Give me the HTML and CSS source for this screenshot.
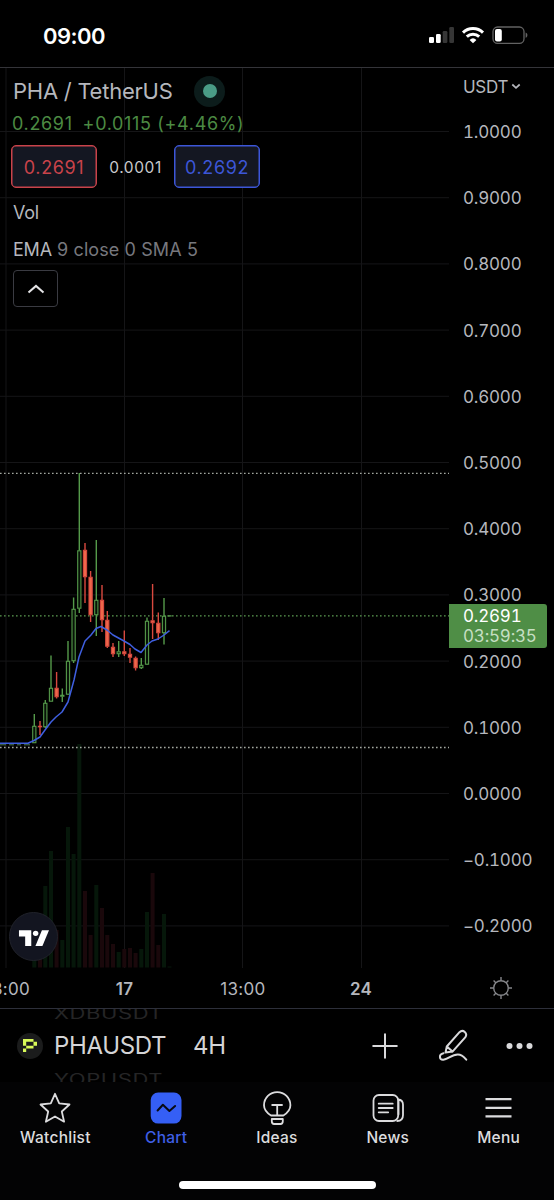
FILE: index.html
```html
<!DOCTYPE html>
<html lang="en">
<head>
<meta charset="utf-8">
<title>PHAUSDT chart</title>
<link rel="stylesheet" href="styles.css">
</head>
<body>
<div class="phone">
  <header class="status">
    <span class="clock">09:00</span>
    <svg class="status-icons" width="102" height="24" viewBox="426 24 102 24">
      <g fill="#fff"><rect x="429" y="37" width="5" height="6" rx="1.3"/><rect x="436" y="34" width="4.7" height="9" rx="1.3"/></g>
      <g fill="#363636"><rect x="442.7" y="31" width="4.7" height="12" rx="1.3"/><rect x="449.3" y="27" width="4.7" height="16" rx="1.3"/></g>
      <g fill="none" stroke="#fff" stroke-width="3"><path d="M463 32.6a14.4 14.4 0 0 1 20 0"/><path d="M466.8 36.7a9 9 0 0 1 12.4 0"/></g>
      <path d="M469.6 39.9a5 5 0 0 1 6.8 0L473 43.3z" fill="#fff"/>
      <rect x="493" y="27" width="31" height="16.3" rx="4.6" fill="none" stroke="#626262" stroke-width="1.3"/>
      <rect x="495" y="29" width="6.8" height="12.4" rx="2" fill="#fff"/>
      <path d="M525.6 32.4c2.4.8 2.4 4.6 0 5.4z" fill="#626262"/>
    </svg>
  </header>

  <main class="chart">
    <div class="plot">
      <svg class="canvas" width="449" height="900" viewBox="0 68 449 900">
        <g id="grid" stroke="#151517" stroke-width="1"></g>
        <g id="volume"></g>
        <g stroke-width="1.3" stroke-dasharray="1.6 2.4">
          <path d="M0 473.3H449" stroke="#a3a8a1"/><path d="M0 747.5H449" stroke="#a3a8a1"/><path d="M0 615.8H449" stroke="#5d9d53"/>
        </g>
        <g id="candles"></g>
        <path d="M0 744.8h6m3 0h5m3 0h4m3 0h6" stroke="#4c7b58" fill="none"/>
        <path d="M0 743.3H28L34 740.5 40 737 45 730 51 722 56 717 62 712 68 702 74 680 79 657 85 641 91 635 96 628.5 101 626.5 107 630 113 635 124 641 130 644.5 135 649 141 652.5 147 645 152 641 158 639 164 635 169.5 630.7" fill="none" stroke="#3f5fe0" stroke-width="1.5" stroke-linejoin="round"/>
      </svg>
      <section class="legend">
        <div class="title"><h1>PHA / TetherUS</h1><span class="market"><i></i></span></div>
        <div class="change"><span>0.2691</span><span>+0.0115 (+4.46%)</span></div>
        <div class="quotes"><span class="quote sell">0.2691</span><span class="spread">0.0001</span><span class="quote buy">0.2692</span></div>
        <div class="vol">Vol</div>
        <div class="ema"><b>EMA</b> 9 close 0 SMA 5</div>
        <button class="collapse" aria-label="Collapse"><svg width="18" height="12" viewBox="0 0 18 12"><path d="M1.5 9.6 9 2.9l7.500 6.700" fill="none" stroke="#e4e4e6" stroke-width="2"/></svg></button>
      </section>
      <span class="brand"><svg width="31" height="17" viewBox="0 0 32 17" fill="#fff"><path d="M1 0h12.700v16.300H7.400V6.500H1z"/><circle cx="18.200" cy="3.200" r="2.800"/><path d="M24.700 0H32l-6.800 16.300H18z"/></svg></span>
    </div>
    <aside class="prices">
      <div class="unit">USDT<svg width="10" height="8" viewBox="0 0 10 8"><path d="m1.300 1.500 3.700 3.300 3.700-3.300" fill="none" stroke="#b5b7bd" stroke-width="1.700"/></svg></div>
      <ol class="scale"><li>1.0000</li><li>0.9000</li><li>0.8000</li><li>0.7000</li><li>0.6000</li><li>0.5000</li><li>0.4000</li><li>0.3000</li><li>0.2000</li><li>0.1000</li><li>0.0000</li><li>−0.1000</li><li>−0.2000</li></ol>
      <div class="last"><span>0.2691</span><span class="countdown">03:59:35</span></div>
    </aside>
  </main>

  <div class="times">
    <span class="first">8:00</span><b>17</b><span>13:00</span><b>24</b>
    <svg class="gear" width="24" height="24" viewBox="0 0 24 24" fill="none" stroke="#85868a" stroke-width="1.400"><circle cx="12" cy="12" r="7.300"/><path d="M12 1v3.500M12 19.500V23M1 12h3.500M19.500 12H23M4.600 4.600 7 7M17 17l2.400 2.400M19.400 4.600 17 7M7 17l-2.400 2.400"/></svg>
  </div>

  <div class="symbolbar">
    <span class="coin"><svg width="14" height="14" viewBox="0 0 14 14" fill="#d9fa58"><path d="M0 0h10.500v2.700H14v4h-3.500V2.700H3.200v4H0zM3.200 6.700h7.300v2.700H3.200zM0 9.400h3.200v3.700H0z"/></svg></span>
    <div class="wheel"><span class="ghost">XDBUSDT</span><span class="symbol">PHAUSDT</span><span class="ghost">YOPUSDT</span></div>
    <span class="interval">4H</span>
    <div class="tools">
      <svg width="26" height="26" viewBox="0 0 26 26" stroke="#d9d9db" stroke-width="2" stroke-linecap="round"><path d="M13 1.200v23.600M1.200 13h23.600"/></svg>
      <svg width="32" height="34" viewBox="0 0 32 34" fill="none" stroke="#d9d9db" stroke-width="2" stroke-linejoin="round" stroke-linecap="round"><path d="M8.800 17.500 21.500 3.200c3.500-3.300 8.700 1 5.700 5.200L14.500 22.600l-7 1zM8.800 17.500l5.700 5.100"/><path d="M5.500 24.200C.3 25.200 1.300 31 5.300 30.800c4.700-.3 8.200-5.300 14.500-5.300 4.700 0 6.200 2.500 8.500 5.200"/></svg>
      <svg width="27" height="8" viewBox="0 0 27 8" fill="#d9d9db"><circle cx="3.500" cy="4" r="3"/><circle cx="13.500" cy="4" r="3"/><circle cx="23.500" cy="4" r="3"/></svg>
    </div>
  </div>

  <nav class="tabs">
    <a><svg width="36" height="36" viewBox="0 0 36 36" fill="none" stroke="#dcdcde" stroke-width="1.800" stroke-linejoin="round"><path d="m18 3.800 4.200 9.600 10.300 1.100-7.700 7 2.300 10.200L18 26.500l-9.100 5.200 2.300-10.200-7.700-7 10.300-1.100z"/></svg>Watchlist</a>
    <a class="active"><svg width="36" height="36" viewBox="0 0 36 36"><rect x="2.700" y="2.600" width="30.800" height="31" rx="7.500" fill="#355ff5"/><path d="m9.600 20.500 5.300-5.700 6.500 6.200 5.700-5" fill="none" stroke="#080a14" stroke-width="2" stroke-linejoin="round" stroke-linecap="round"/></svg>Chart</a>
    <a><svg width="36" height="36" viewBox="0 0 36 36" fill="none" stroke="#dcdcde" stroke-width="1.800" stroke-linejoin="round"><path d="M12 25.500C7.500 22.700 5 19.500 5 15.300a13.200 13.200 0 0 1 26.400 0c0 4.200-2.500 7.400-7 10.200z"/><path d="M12.800 29h11v2.300c0 1.800-.8 2.700-2.300 2.700h-6.400c-1.500 0-2.300-.9-2.300-2.700zM12.500 15h11.200M18.200 15v10"/></svg>Ideas</a>
    <a><svg width="36" height="36" viewBox="0 0 36 36" fill="none" stroke="#dcdcde" stroke-width="1.800" stroke-linejoin="round" stroke-linecap="round"><rect x="3.500" y="5" width="24.700" height="26" rx="5.500"/><path d="M28.200 9.500c3 .3 4.800 2 4.800 5.200V25c0 3.500-2 6-5.800 6M28.500 10v14.200" /><path d="M8.700 13.700h14M8.700 18h14M8.700 22.300h9.500"/></svg>News</a>
    <a><svg width="36" height="36" viewBox="0 0 36 36" stroke="#dcdcde" stroke-width="2.300"><path d="M4.500 9.200h26M4.500 17.900h26M4.500 26.400h26"/></svg>Menu</a>
    <i class="home"></i>
  </nav>
</div>
<script src="chart.js"></script>
</body>
</html>
```
FILE: styles.css
```css
* { box-sizing: border-box; }
body { margin: 0; background: #000; color: #b5b7bd; font-family: Inter, "Liberation Sans", sans-serif; }
h1, ol { margin: 0; padding: 0; font: inherit; list-style: none; }
svg { display: block; flex: none; }
.phone { width: 554px; height: 1200px; display: flex; flex-direction: column; overflow: hidden; background: #000; }

.status { height: 68px; flex: none; display: flex; justify-content: space-between; padding: 24px 26px 0 43px; border-bottom: 1px solid #343439; }
.clock { font-size: 22px; line-height: 24px; font-weight: 600; color: #fff; letter-spacing: -0.5px; }

.chart { height: 900px; flex: none; display: grid; grid-template-columns: 449px 105px; }
.plot, .prices { position: relative; }
.legend { position: absolute; left: 11px; top: 7px; display: flex; flex-direction: column; align-items: flex-start; white-space: nowrap; }
.title { display: flex; align-items: center; height: 32px; padding-left: 2px; gap: 22px; }
.title h1 { width: 159px; font-size: 22px; letter-spacing: -0.25px; }
.market { width: 31px; height: 31px; border-radius: 50%; background: #0c1c1b; display: grid; place-items: center; }
.market i { width: 14px; height: 14px; border-radius: 50%; background: #4a9c86; }
.change { display: flex; gap: 10px; height: 32px; line-height: 34px; padding-left: 1px; font-size: 18px; letter-spacing: 0.65px; color: #4c8a43; }
.quotes { display: flex; align-items: center; margin-top: 6px; height: 43px; }
.quote { width: 86px; height: 43px; padding-top: 1px; border: 1.500px solid; border-radius: 5px; background: #141722; display: grid; place-items: center; font-size: 18px; letter-spacing: 0.6px; box-shadow: inset 0 0 0 0.500px; }
.sell { color: #c9434a; }
.buy { color: #3c56d8; }
.spread { width: 77px; padding-top: 1px; text-align: center; font-size: 15.500px; letter-spacing: 0.6px; color: #c9cacd; }
.vol { margin: 14px 0 0 2px; height: 22px; line-height: 22px; font-size: 18px; letter-spacing: -0.3px; }
.ema { margin: 15px 0 0 2px; height: 22px; line-height: 22px; font-size: 18px; letter-spacing: 0.1px; color: #77787e; }
.ema b { font-weight: 400; letter-spacing: -0.2px; color: #b5b7bd; }
.collapse { margin: 9px 0 0 2px; padding: 0; width: 45px; height: 37px; display: grid; place-items: center; border: 1px solid #3a3b42; border-radius: 4px; background: #000; }
.brand { position: absolute; left: 9px; top: 844px; width: 49px; height: 49px; padding-top: 3px; border-radius: 50%; border: 1px solid #20222a; background: #131520; display: grid; place-items: center; }

.unit { display: flex; align-items: center; gap: 3px; height: 31px; padding: 7px 0 0 14px; font-size: 17px; letter-spacing: -0.3px; }
.scale { font-size: 17px; letter-spacing: -0.2px; font-variant-numeric: tabular-nums; }
.scale li { height: 66.200px; line-height: 66.200px; padding-left: 14px; }
.last { position: absolute; left: 0; top: 536px; width: 98px; height: 44px; padding: 2px 0 0 14px; border-radius: 0 3px 3px 0; background: #4f8e46; color: #fff; display: flex; flex-direction: column; font-size: 17px; line-height: 20px; letter-spacing: -0.2px; font-variant-numeric: tabular-nums; }
.countdown { color: #c6dfc3; }

.times { height: 41px; flex: none; display: grid; grid-template-columns: 65px 119px 118px 118px 1fr; align-items: center; padding-top: 2px; border-bottom: 1px solid #2d2f3a; font-size: 17px; letter-spacing: 0.3px; text-align: center; }
.times b { font-weight: 600; }
.times .first { margin-left: -8px; text-align: left; }
.gear { justify-self: center; margin: -3px 0 0 28px; }

.symbolbar { height: 73px; flex: none; display: flex; align-items: center; padding: 0 21px 0 17px; overflow: hidden; color: #d4d4d6; }
.coin { width: 26px; height: 26px; border-radius: 50%; background: #1b1c1c; display: grid; place-items: center; flex: none; }
.wheel { display: flex; flex-direction: column; align-items: flex-start; justify-content: center; margin-left: 11px; height: 73px; width: 140px; overflow: hidden; }
.symbol, .interval { font-size: 24px; line-height: 48px; letter-spacing: -0.35px; }
.ghost { font-size: 22px; line-height: 18px; letter-spacing: 0.6px; color: #252526; transform: scaleY(0.7); }
.interval { width: 36px; margin-left: -1px; }
.tools { flex: 1; display: flex; align-items: center; justify-content: flex-end; gap: 36.500px; }
.tools svg:first-child { margin-right: 3px; }

.tabs { position: relative; flex: 1; display: grid; grid-template-columns: repeat(5, 1fr); padding-top: 8px; background: #030304; }
.tabs a { display: flex; flex-direction: column; align-items: center; gap: 2px; height: 60px; font-size: 15.500px; font-weight: 500; line-height: 20px; letter-spacing: 0.25px; color: #dcdcde; }
.tabs .active { color: #3f5fe6; }
.home { position: absolute; left: 179px; bottom: 11px; width: 197px; height: 8px; border-radius: 4px; background: #fff; }
```
FILE: chart.js
```javascript
const NS = "http://www.w3.org/2000/svg";
function add(parent, name, attrs) {
  const el = document.createElementNS(NS, name);
  for (const key in attrs) el.setAttribute(key, attrs[key]);
  document.getElementById(parent).append(el);
}

for (const x of [6, 124.5, 242.5, 361.5]) add("grid", "path", { d: `M${x} 68V968` });
for (let i = 0; i < 13; i++) add("grid", "path", { d: `M0 ${131.5 + i * 66.2}H449` });

// x, high, body top, body bottom, low, rising, volume top
const bars = [
  [34.3, 714, 726, 743, 743, 1, 960], [40, 721, 726, 727, 735, 0, 955], [45.3, 700, 703, 727, 728, 1, 886],
  [51, 655.5, 688, 701.5, 701.5, 1, 851], [56.6, 672, 688, 697, 698.5, 0, 930], [62.3, 688.5, 695, 696.5, 702, 1, 940],
  [68, 641, 661, 694.5, 695, 1, 827], [73.6, 597.5, 609, 661, 663, 1, 854], [79.3, 473, 550.5, 608.5, 613, 1, 744],
  [85, 543, 550, 577, 603, 0, 891], [90.6, 571, 577, 615, 622, 0, 935], [96.3, 540, 600, 615, 636, 1, 885],
  [102, 585, 600, 620, 632, 0, 908], [107.3, 611, 620, 646.5, 648, 0, 935], [113, 643, 647, 654, 657, 0, 944],
  [118.7, 641, 651.5, 654, 657, 1, 952], [124.3, 630.5, 651.5, 654, 656, 0, 949], [130, 648, 654, 657.5, 663, 0, 948],
  [135.6, 656.5, 658, 668, 670.5, 0, 953], [141.3, 658, 665, 668, 669, 1, 949], [147, 617.5, 621, 664.5, 665, 1, 912],
  [152.6, 584, 620.5, 623, 639, 0, 873], [158.3, 612.5, 623, 633, 640, 0, 945], [164, 598, 616, 633, 644.5, 1, 914],
  [169.5, 615.5, 615.5, 616, 616, 1, 966.5]
];
for (const [x, high, top, bottom, low, rising, vol] of bars) {
  const color = rising ? "#559a4a" : "#d9493f";
  add("volume", "rect", { x: x - 2, y: vol, width: 4, height: 967.5 - vol, fill: rising ? "#06170a" : "#1a080b" });
  add("candles", "path", { d: `M${x} ${high}V${top}M${x} ${bottom}V${low}`, stroke: color, "stroke-width": 1.4 });
  add("candles", "rect", { x: x - 1.6, y: top + 0.3, width: 3.2, height: Math.max(bottom - top - 0.6, 0.2), fill: rising ? "#071207" : "#ee684b", stroke: color, "stroke-width": 1.1 });
}
```
